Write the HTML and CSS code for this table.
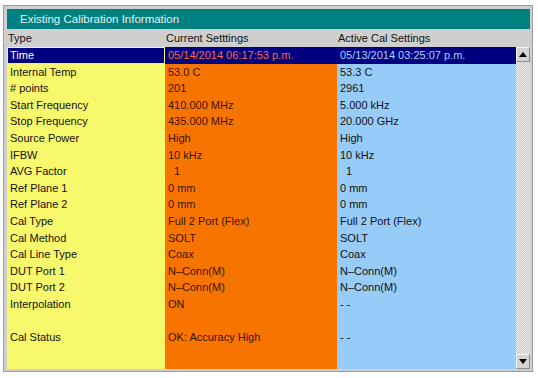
FILE: index.html
```html
<!DOCTYPE html>
<html lang="en">
<head>
    <meta charset="UTF-8" />
    <title>Existing Calibration Information</title>
    <link rel="stylesheet" href="styles.css">
</head>
<body>

    <div class="cal-panel">
        <div class="cal-title">Existing Calibration Information</div>

        <div class="cal-header">
            <span>Type</span>
            <span>Current Setttings</span>
            <span>Active Cal Settings</span>
        </div>

        <div class="cal-body">
            <div class="cal-table">
                <div class="cal-row selected">
                    <span class="col-type">Time</span>
                    <span class="col-current">05/14/2014 06:17:53 p.m.</span>
                    <span class="col-active">05/13/2014 03:25:07 p.m.</span>
                </div>
                <div class="cal-row">
                    <span class="col-type">Internal Temp</span>
                    <span class="col-current">53.0 C</span>
                    <span class="col-active">53.3 C</span>
                </div>
                <div class="cal-row">
                    <span class="col-type"># points</span>
                    <span class="col-current">201</span>
                    <span class="col-active">2961</span>
                </div>
                <div class="cal-row">
                    <span class="col-type">Start Frequency</span>
                    <span class="col-current">410.000 MHz</span>
                    <span class="col-active">5.000 kHz</span>
                </div>
                <div class="cal-row">
                    <span class="col-type">Stop Frequency</span>
                    <span class="col-current">435.000 MHz</span>
                    <span class="col-active">20.000 GHz</span>
                </div>
                <div class="cal-row">
                    <span class="col-type">Source Power</span>
                    <span class="col-current">High</span>
                    <span class="col-active">High</span>
                </div>
                <div class="cal-row">
                    <span class="col-type">IFBW</span>
                    <span class="col-current">10 kHz</span>
                    <span class="col-active">10 kHz</span>
                </div>
                <div class="cal-row">
                    <span class="col-type">AVG Factor</span>
                    <span class="col-current">&nbsp;&nbsp;1</span>
                    <span class="col-active">&nbsp;&nbsp;1</span>
                </div>
                <div class="cal-row">
                    <span class="col-type">Ref Plane 1</span>
                    <span class="col-current">0 mm</span>
                    <span class="col-active">0 mm</span>
                </div>
                <div class="cal-row">
                    <span class="col-type">Ref Plane 2</span>
                    <span class="col-current">0 mm</span>
                    <span class="col-active">0 mm</span>
                </div>
                <div class="cal-row">
                    <span class="col-type">Cal Type</span>
                    <span class="col-current">Full 2 Port (Flex)</span>
                    <span class="col-active">Full 2 Port (Flex)</span>
                </div>
                <div class="cal-row">
                    <span class="col-type">Cal Method</span>
                    <span class="col-current">SOLT</span>
                    <span class="col-active">SOLT</span>
                </div>
                <div class="cal-row">
                    <span class="col-type">Cal Line Type</span>
                    <span class="col-current">Coax</span>
                    <span class="col-active">Coax</span>
                </div>
                <div class="cal-row">
                    <span class="col-type">DUT Port 1</span>
                    <span class="col-current">N&#8211;Conn(M)</span>
                    <span class="col-active">N&#8211;Conn(M)</span>
                </div>
                <div class="cal-row">
                    <span class="col-type">DUT Port 2</span>
                    <span class="col-current">N&#8211;Conn(M)</span>
                    <span class="col-active">N&#8211;Conn(M)</span>
                </div>
                <div class="cal-row">
                    <span class="col-type">Interpolation</span>
                    <span class="col-current">ON</span>
                    <span class="col-active"><span class="no-value">--</span></span>
                </div>
                <div class="cal-row">
                    <span class="col-type"></span>
                    <span class="col-current"></span>
                    <span class="col-active"></span>
                </div>
                <div class="cal-row">
                    <span class="col-type">Cal Status</span>
                    <span class="col-current">OK: Accuracy High</span>
                    <span class="col-active"><span class="no-value">--</span></span>
                </div>
                <!-- empty space below the last row keeps the column colours -->
                <div class="cal-row filler">
                    <span class="col-type"></span>
                    <span class="col-current"></span>
                    <span class="col-active"></span>
                </div>
            </div>

            <div class="scrollbar">
                <div class="scroll-btn">
                    <svg width="8" height="5" viewBox="0 0 8 5"><polygon points="4,0 8,5 0,5" fill="#000"/></svg>
                </div>
                <div class="scroll-track"></div>
                <div class="scroll-btn">
                    <svg width="8" height="5" viewBox="0 0 8 5"><polygon points="0,0 8,0 4,5" fill="#000"/></svg>
                </div>
            </div>
        </div>
    </div>

</body>
</html>
```

FILE: styles.css
```css
body {
    margin: 0;
    background-color: #fff;
    font-family: "Liberation Sans", Arial, sans-serif;
    font-size: 11px;
}

.cal-panel {
    box-sizing: border-box;
    width: 530px;
    height: 367px;
    margin: 5px 0 0 3px;
    padding: 3px 2px 2px 3px;
    border: 1px solid #9c9c9c;
    background-color: #cfcfcf;
    display: flex;
    flex-direction: column;
}

.cal-title {
    height: 20px;
    line-height: 21px;
    padding-left: 13px;
    background-color: #008080;
    color: #e4f2f2;
    font-size: 11.5px;
}

.cal-header {
    height: 18px;
    line-height: 18px;
    display: grid;
    grid-template-columns: 158px 172px 1fr;
    color: #111;
}

.cal-header span {
    padding-left: 1px;
}

.cal-body {
    flex: 1;
    display: flex;
    min-height: 0;
}

.cal-table {
    flex: 1;
    display: flex;
    flex-direction: column;
}

.cal-row {
    height: 16.6px;
    line-height: 16.6px;
    display: grid;
    grid-template-columns: 158px 172px 1fr;
    white-space: nowrap;
}

.cal-row > span {
    padding-left: 3px;
    overflow: hidden;
}

.cal-row.filler {
    flex: 1;
}

.no-value {
    letter-spacing: 3px;
}

.col-type {
    background-color: #f8f86c;
    color: #111;
}

.col-current {
    background-color: #f87400;
    color: #3a1400;
}

.col-active {
    background-color: #98ccf8;
    color: #111;
}

.cal-row.selected > span {
    background-color: #000080;
}

.cal-row.selected .col-type {
    color: #fff;
    box-shadow: inset 0 0 0 1px #f8f86c;
}

.cal-row.selected .col-current {
    color: #ff6a3a;
}

.cal-row.selected .col-active {
    color: #a8d4ff;
}

.scrollbar {
    width: 14px;
    display: flex;
    flex-direction: column;
}

.scroll-btn {
    box-sizing: border-box;
    height: 15px;
    display: flex;
    align-items: center;
    justify-content: center;
    background-color: #d4d4d4;
    border: 1px solid;
    border-color: #f4f4f4 #8a8a8a #8a8a8a #f4f4f4;
}

.scroll-track {
    flex: 1;
    background: repeating-conic-gradient(#c4c4c4 0 25%, #f2f2f2 0 50%) 0 0 / 2px 2px;
}
```
